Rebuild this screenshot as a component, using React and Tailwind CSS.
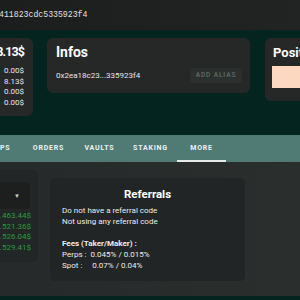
import React from "react";

const tabs = ["PERPS", "ORDERS", "VAULTS", "STAKING", "MORE"];
const balances = ["0.00$", "8.13$", "0.00$", "0.00$"];
const history = [".463.44$", ".521.36$", ".526.04$", ".529.41$"];

export default function App() {
  return (
    <div className="w-[300px] h-[300px] overflow-hidden bg-[#04251f] flex flex-col font-['Roboto',sans-serif] text-[#e6e6e6]">
      {/* address bar */}
      <div className="h-[30px] shrink-0 bg-gradient-to-r from-[#1c1d1d] to-[#222323] flex items-center">
        <span className="ml-[-1px] font-['Liberation_Mono',monospace] text-[8.2px] text-[#e0e0e0]">
          411823cdc5335923f4
        </span>
      </div>

      {/* summary cards */}
      <div className="flex items-start mt-[8px] h-[97px] shrink-0">
        <div className="ml-[-30px] w-[63px] h-[78px] shrink-0 rounded-[6px] bg-[#262828] flex flex-col items-end pr-[9px] pt-[6px]">
          <div className="text-[12.5px] font-bold leading-[16px] tracking-[-0.9px] text-white">8.13$</div>
          <div className="mt-[6px] flex flex-col items-end text-[8px] leading-[10.7px]">
            {balances.map((b, i) => (
              <span key={i}>{b}</span>
            ))}
          </div>
        </div>

        <div className="ml-[14px] w-[203px] h-[55px] shrink-0 rounded-[6px] bg-[#262828] pl-[9px] pr-[8px] pt-[6px] flex flex-col">
          <div className="text-[14px] font-bold leading-[16px] text-white">Infos</div>
          <div className="mt-[8px] flex items-center justify-between">
            <span className="text-[8px]">0x2ea18c23...335923f4</span>
            <button className="w-[52px] h-[15px] rounded-[3px] bg-[#2b2f2e] text-[6.5px] font-bold tracking-[0.9px] text-[#5a6663]">
              ADD ALIAS
            </button>
          </div>
        </div>

        <div className="ml-[15px] w-[60px] h-[63px] shrink-0 rounded-[6px] bg-[#262828] pl-[8px] pt-[7px] flex flex-col">
          <div className="text-[13px] font-bold leading-[16px] text-white">Positions</div>
          <div className="mt-[5px] ml-[-1px] h-[22px] bg-[#fdd8c0]"></div>
        </div>
      </div>

      {/* tabs */}
      <div className="h-[27px] shrink-0 bg-[#507a74] flex items-stretch gap-[2px] ml-[-27px]">
        {tabs.map((t) => (
          <div
            key={t}
            className={`w-[49px] shrink-0 flex items-center justify-center text-[7px] font-bold tracking-[0.8px] text-[#eef3f2] ${
              t === "MORE" ? "border-b-2 border-[#e6ecea] pt-[2px]" : ""
            }`}
          >
            {t}
          </div>
        ))}
      </div>

      {/* content */}
      <div className="h-[134px] shrink-0 bg-gradient-to-r from-[#262a2a] to-[#2a2f2e] flex items-start">
        <div className="mt-[8px] ml-[-20px] w-[58px] h-[92px] shrink-0 rounded-[5px] bg-[#232626] flex flex-col">
          <div className="mt-[12px] h-[27px] w-[50px] rounded-[4px] bg-[#1d1f1f] flex items-center justify-end pr-[10px]">
            <span className="text-[6px] text-[#d0d0d0]">▼</span>
          </div>
          <div className="mt-[2px] pr-[7px] flex flex-col items-end text-[8px] leading-[10.5px] text-[#2a9a3c]">
            {history.map((h, i) => (
              <span key={i}>{h}</span>
            ))}
          </div>
        </div>

        <div className="mt-[16px] ml-[12px] w-[195px] h-[103px] shrink-0 rounded-[5px] bg-[#222525] pl-[12px] pt-[8px] flex flex-col text-[8px] leading-[11px] text-[#ececec]">
          <div className="text-center pr-[12px] text-[11.5px] font-bold leading-[16px] text-white">Referrals</div>
          <div className="mt-[3px]">Do not have a referral code</div>
          <div>Not using any referral code</div>
          <div className="mt-[11px] font-bold">Fees (Taker/Maker) :</div>
          <div className="whitespace-pre">Perps :  0.045% / 0.015%</div>
          <div className="whitespace-pre">Spot :     0.07% / 0.04%</div>
        </div>
      </div>
    </div>
  );
}
